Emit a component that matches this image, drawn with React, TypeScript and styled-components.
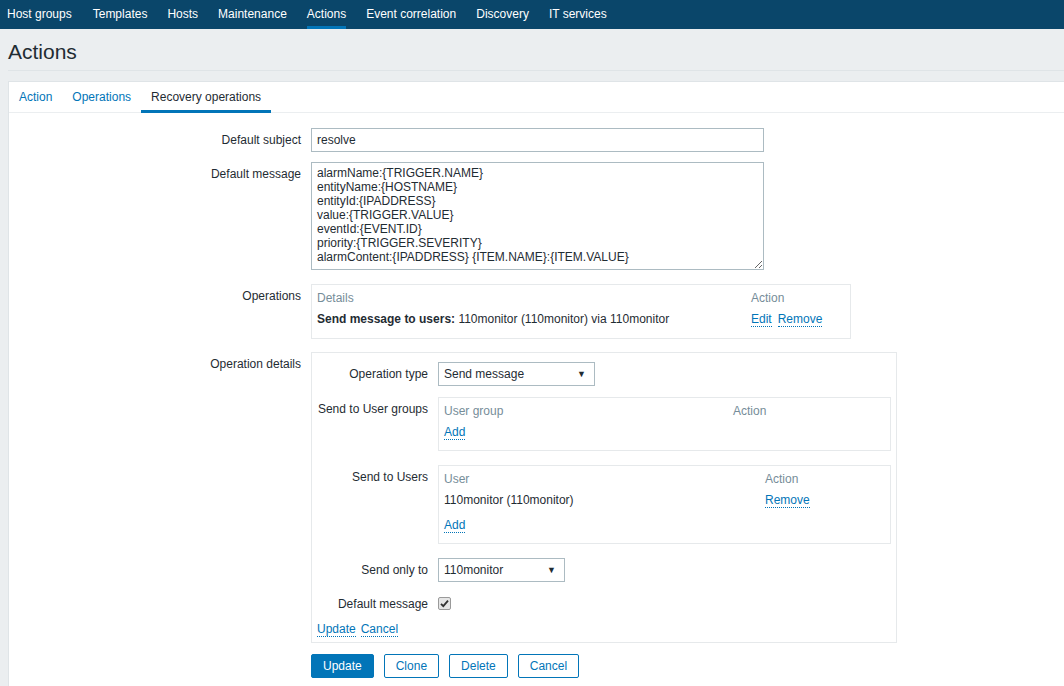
import React from 'react';
import styled, { createGlobalStyle, css } from 'styled-components';

const GlobalStyle = createGlobalStyle`
  html, body {
    margin: 0;
    padding: 0;
    background: #ebeef0;
  }
  body {
    font-family: "Liberation Sans", Arial, sans-serif;
    font-size: 12px;
    color: #1f2c33;
  }
  * {
    box-sizing: border-box;
  }
`;

const TopNav = styled.nav`
  display: flex;
  height: 29px;
  background: #0a466a;
  padding-left: 7px;
`;

const NavItem = styled.a<{ $active?: boolean }>`
  display: block;
  margin-right: 20px;
  line-height: 28px;
  color: #fff;
  text-decoration: none;
  white-space: nowrap;
  &:first-child {
    margin-right: 21px;
  }
  ${({ $active }) =>
    $active &&
    css`
      box-shadow: inset 0 -3px 0 #0275b8;
    `}
`;

const Main = styled.main`
  padding-left: 8px;
`;

const Header = styled.header`
  padding: 11px 0 6px;
  border-bottom: 1px solid #dfe4e7;
  margin-bottom: 10px;
`;

const Title = styled.h1`
  margin: 0;
  font-size: 21px;
  font-weight: normal;
  line-height: 24px;
  color: #1f2c33;
`;

const Panel = styled.section`
  background: #fff;
  border: 1px solid #dfe4e7;
  border-right: none;
  padding-bottom: 30px;
`;

const TabBar = styled.ul`
  display: flex;
  margin: 0;
  padding: 0;
  list-style: none;
  border-bottom: 1px solid #ebeef0;
`;

const Tab = styled.li<{ $active?: boolean }>`
  height: 31px;
  line-height: 31px;
  padding: 0 10px;
  margin-bottom: -1px;
  color: ${({ $active }) => ($active ? '#1f2c33' : '#0275b8')};
  ${({ $active }) =>
    $active &&
    css`
      box-shadow: inset 0 -3px 0 #0275b8;
    `}
`;

const Form = styled.form`
  padding-top: 10px;
`;

const FormRow = styled.div`
  display: grid;
  grid-template-columns: 302px auto;
  padding: 5px 0;
`;

const Label = styled.label`
  text-align: right;
  padding: 5px 10px 0 0;
  line-height: 14px;
`;

const Field = styled.div`
  display: flex;
  flex-direction: column;
  align-items: flex-start;
`;

const TextInput = styled.input`
  width: 453px;
  height: 24px;
  padding: 0 5px;
  border: 1px solid #acbbc2;
  font: inherit;
  color: #1f2c33;
  outline: none;
`;

const TextArea = styled.textarea`
  display: block;
  width: 453px;
  height: 108px;
  padding: 3px 5px;
  margin-bottom: 4px;
  border: 1px solid #acbbc2;
  font: inherit;
  line-height: 14px;
  color: #1f2c33;
  outline: none;
  overflow: hidden;
`;

const Box = styled.div<{ $width: number; $gapAfter?: number }>`
  width: ${({ $width }) => $width}px;
  border: 1px solid #e6e9eb;
  padding: 2px 5px 7px;
  margin-bottom: ${({ $gapAfter }) => $gapAfter ?? 0}px;
`;

const DetailsBox = styled.div`
  width: 586px;
  border: 1px solid #e6e9eb;
  padding: 4px 5px 5px;
`;

const GridRow = styled.div<{ $first: number; $head?: boolean; $extra?: number }>`
  display: grid;
  grid-template-columns: ${({ $first }) => $first}px auto;
  padding: ${({ $head }) => ($head ? '4px 0 3px' : '4px 0')};
  margin-top: ${({ $extra }) => $extra ?? 0}px;
  line-height: 14px;
  color: ${({ $head }) => ($head ? '#768d99' : '#1f2c33')};
`;

const Link = styled.a`
  color: #0275b8;
  text-decoration: none;
  border-bottom: 1px dotted #0275b8;
  cursor: pointer;
`;

const LinkGroup = styled.span<{ $gap?: number }>`
  display: inline-flex;
  gap: ${({ $gap }) => $gap ?? 6}px;
  align-items: flex-start;
`;

const InnerRow = styled.div`
  display: grid;
  grid-template-columns: 121px auto;
  padding: 5px 0;
`;

const InnerField = styled.div<{ $gapAfter?: number }>`
  display: flex;
  align-items: flex-start;
  padding-bottom: ${({ $gapAfter }) => $gapAfter ?? 0}px;
`;

const Select = styled.div<{ $width: number }>`
  display: flex;
  align-items: center;
  justify-content: space-between;
  width: ${({ $width }) => $width}px;
  height: 24px;
  padding: 0 8px 0 5px;
  border: 1px solid #acbbc2;
  background: #fff;
  color: #1f2c33;
`;

const Arrow = styled.span`
  font-size: 9px;
  line-height: 1;
  color: #1f2c33;
`;

const CheckBox = styled.span`
  display: block;
  width: 13px;
  height: 13px;
  margin-top: 5px;
`;

const FooterLinks = styled.div`
  padding: 5px 0 0;
  line-height: 14px;
`;

const ButtonRow = styled.div`
  display: flex;
  gap: 10px;
  padding: 6px 0 0 302px;
`;

const Button = styled.button<{ $primary?: boolean }>`
  height: 24px;
  padding: 0 11px;
  border: 1px solid #0275b8;
  border-radius: 2px;
  font: inherit;
  background: ${({ $primary }) => ($primary ? '#0275b8' : '#fff')};
  color: ${({ $primary }) => ($primary ? '#fff' : '#0275b8')};
  cursor: pointer;
`;

const Bold = styled.b`
  font-weight: bold;
`;

const navItems = [
  'Host groups',
  'Templates',
  'Hosts',
  'Maintenance',
  'Actions',
  'Event correlation',
  'Discovery',
  'IT services',
];

const message = [
  'alarmName:{TRIGGER.NAME}',
  'entityName:{HOSTNAME}',
  'entityId:{IPADDRESS}',
  'value:{TRIGGER.VALUE}',
  'eventId:{EVENT.ID}',
  'priority:{TRIGGER.SEVERITY}',
  'alarmContent:{IPADDRESS} {ITEM.NAME}:{ITEM.VALUE}',
].join('\n');

function Checked() {
  return (
    <CheckBox>
      <svg width="13" height="13" viewBox="0 0 13 13">
        <rect x="0.5" y="0.5" width="12" height="12" rx="1.5" fill="#e6e6e6" stroke="#9a9a9a" />
        <path d="M3 6.8 L5.3 9.2 L10 3.6" fill="none" stroke="#333" strokeWidth="1.8" />
      </svg>
    </CheckBox>
  );
}

export default function App() {
  return (
    <>
      <GlobalStyle />
      <TopNav>
        {navItems.map((item) => (
          <NavItem key={item} $active={item === 'Actions'}>
            {item}
          </NavItem>
        ))}
      </TopNav>
      <Main>
        <Header>
          <Title>Actions</Title>
        </Header>
        <Panel>
          <TabBar>
            <Tab>Action</Tab>
            <Tab>Operations</Tab>
            <Tab $active>Recovery operations</Tab>
          </TabBar>
          <Form onSubmit={(e) => e.preventDefault()}>
            <FormRow>
              <Label>Default subject</Label>
              <Field>
                <TextInput defaultValue="resolve" />
              </Field>
            </FormRow>
            <FormRow>
              <Label>Default message</Label>
              <Field>
                <TextArea defaultValue={message} />
              </Field>
            </FormRow>
            <FormRow>
              <Label>Operations</Label>
              <Field>
                <Box $width={540} $gapAfter={3}>
                  <GridRow $first={434} $head>
                    <span>Details</span>
                    <span>Action</span>
                  </GridRow>
                  <GridRow $first={434}>
                    <span>
                      <Bold>Send message to users:</Bold> 110monitor (110monitor) via 110monitor
                    </span>
                    <LinkGroup>
                      <Link>Edit</Link>
                      <Link>Remove</Link>
                    </LinkGroup>
                  </GridRow>
                </Box>
              </Field>
            </FormRow>
            <FormRow>
              <Label>Operation details</Label>
              <Field>
                <DetailsBox>
                  <InnerRow>
                    <Label>Operation type</Label>
                    <InnerField $gapAfter={1}>
                      <Select $width={157}>
                        <span>Send message</span>
                        <Arrow>▼</Arrow>
                      </Select>
                    </InnerField>
                  </InnerRow>
                  <InnerRow>
                    <Label>Send to User groups</Label>
                    <InnerField $gapAfter={4}>
                      <Box $width={453}>
                        <GridRow $first={289} $head>
                          <span>User group</span>
                          <span>Action</span>
                        </GridRow>
                        <GridRow $first={289}>
                          <span>
                            <Link>Add</Link>
                          </span>
                        </GridRow>
                      </Box>
                    </InnerField>
                  </InnerRow>
                  <InnerRow>
                    <Label>Send to Users</Label>
                    <InnerField $gapAfter={4}>
                      <Box $width={453}>
                        <GridRow $first={321} $head>
                          <span>User</span>
                          <span>Action</span>
                        </GridRow>
                        <GridRow $first={321}>
                          <span>110monitor (110monitor)</span>
                          <span>
                            <Link>Remove</Link>
                          </span>
                        </GridRow>
                        <GridRow $first={321} $extra={3}>
                          <span>
                            <Link>Add</Link>
                          </span>
                        </GridRow>
                      </Box>
                    </InnerField>
                  </InnerRow>
                  <InnerRow>
                    <Label>Send only to</Label>
                    <InnerField>
                      <Select $width={127}>
                        <span>110monitor</span>
                        <Arrow>▼</Arrow>
                      </Select>
                    </InnerField>
                  </InnerRow>
                  <InnerRow>
                    <Label>Default message</Label>
                    <InnerField $gapAfter={2}>
                      <Checked />
                    </InnerField>
                  </InnerRow>
                  <FooterLinks>
                    <LinkGroup $gap={5}>
                      <Link>Update</Link>
                      <Link>Cancel</Link>
                    </LinkGroup>
                  </FooterLinks>
                </DetailsBox>
              </Field>
            </FormRow>
            <ButtonRow>
              <Button $primary>Update</Button>
              <Button>Clone</Button>
              <Button>Delete</Button>
              <Button>Cancel</Button>
            </ButtonRow>
          </Form>
        </Panel>
      </Main>
    </>
  );
}
